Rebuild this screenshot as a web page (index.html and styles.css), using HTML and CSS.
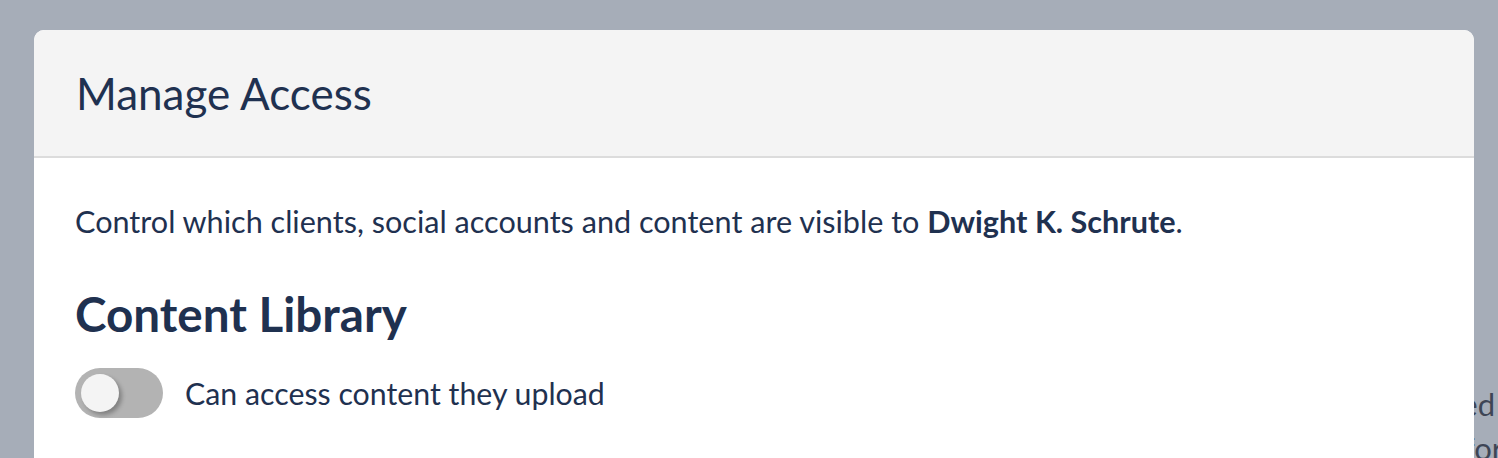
FILE: index.html
```html
<!DOCTYPE html>
<html lang="en">
<head>
<meta charset="utf-8">
<title>Manage Access</title>
<link rel="stylesheet" href="styles.css">
</head>
<body>
<div class="backdrop-page">
  <div class="bg-line">Last updated</div>
  <div class="bg-line bg-line-2">for</div>
</div>
<div class="modal">
  <header class="modal-header">
    <h1 class="modal-title">Manage Access</h1>
  </header>
  <section class="modal-body">
    <p class="intro">Control which clients, social accounts and content are visible to <strong>Dwight K. Schrute</strong>.</p>
    <h2 class="section-title">Content Library</h2>
    <label class="toggle-row">
      <span class="toggle"><span class="knob"></span></span>
      <span class="toggle-label">Can access content they upload</span>
    </label>
  </section>
</div>
</body>
</html>
```

FILE: styles.css
```css
html, body {
  margin: 0;
  padding: 0;
}
body {
  width: 1498px;
  height: 458px;
  overflow: hidden;
  position: relative;
  background: #a6adb8;
  font-family: "Lato", "Liberation Sans", sans-serif;
  color: #1f3150;
}
.backdrop-page {
  position: absolute;
  top: 382px;
  right: 3px;
  text-align: right;
  font-size: 31px;
  line-height: 44px;
  color: #3e4555;
  white-space: nowrap;
}
.bg-line-2 {
  margin-right: -8px;
}
.modal {
  position: relative;
  margin: 30px 0 0 34px;
  width: 1440px;
  height: 428px;
  background: #ffffff;
  border-radius: 10px 10px 0 0;
  overflow: hidden;
}
.modal-header {
  height: 128px;
  box-sizing: border-box;
  display: flex;
  align-items: center;
  padding: 0 41px;
  background: #f4f4f4;
  border-bottom: 2px solid #dcdcdc;
}
.modal-title {
  margin: 0 0 0 1px;
  font-size: 44px;
  line-height: 54px;
  font-weight: 400;
}
.modal-body {
  padding: 44px 41px 0;
}
.intro {
  margin: 0;
  font-size: 30.6px;
  line-height: 40px;
}
.intro strong {
  font-weight: 700;
}
.section-title {
  margin: 44px 0 0;
  font-size: 47.6px;
  line-height: 56px;
  font-weight: 700;
}
.toggle-row {
  display: flex;
  align-items: center;
  gap: 22px;
  margin-top: 26px;
}
.toggle {
  width: 88px;
  height: 50px;
  border-radius: 25px;
  background: #b3b3b3;
  display: flex;
  align-items: center;
  padding-left: 6px;
  box-sizing: border-box;
}
.knob {
  width: 38px;
  height: 38px;
  border-radius: 50%;
  background: #f4f4f4;
  box-shadow: 3px 3px 4px rgba(0, 0, 0, 0.28);
}
.toggle-label {
  font-size: 30.3px;
  line-height: 40px;
}
```
